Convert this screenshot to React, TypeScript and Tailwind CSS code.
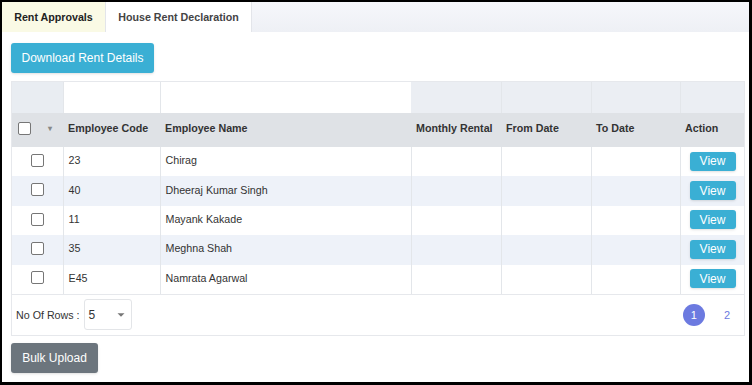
import { ChevronDown } from "lucide-react"

const rows = [
	{ code: "23", name: "Chirag" },
	{ code: "40", name: "Dheeraj Kumar Singh" },
	{ code: "11", name: "Mayank Kakade" },
	{ code: "35", name: "Meghna Shah" },
	{ code: "E45", name: "Namrata Agarwal" },
]

function Box({ className = "" }: { className?: string }) {
	return <span className={`inline-block size-[13px] rounded-[2px] border border-[#767676] bg-white align-middle ${className}`} />
}

export default function App() {
	return (
		<div className="h-[385px] w-[752px] overflow-hidden border-t-2 border-r-[3px] border-b-[3px] border-l-2 border-black bg-white font-['Liberation_Sans',Arial,sans-serif] text-[10.7px] text-[#333]">
			<div className="flex h-[30px] bg-gradient-to-b from-[#f6f7fb] to-[#eef0f5]">
				<div className="flex w-[103px] items-center justify-center bg-[#fafae5] font-bold text-[#222]">Rent Approvals</div>
				<div className="flex w-[147px] items-center justify-center border-x border-[#e3e5ea] bg-white font-bold text-[#444]">
					House Rent Declaration
				</div>
			</div>
			<div className="px-[9px] pt-[11px]">
				<button className="h-[30px] w-[143px] rounded-[3px] bg-[#3aafd4] text-[12px] text-white shadow-sm">Download Rent Details</button>
				<div className="mt-[8px] w-[734px] border border-[#e6e8ec]">
					<table className="w-full table-fixed border-collapse">
						<colgroup>
							<col className="w-[51px]" />
							<col className="w-[97px]" />
							<col className="w-[251px]" />
							<col className="w-[90px]" />
							<col className="w-[90px]" />
							<col className="w-[89px]" />
							<col />
						</colgroup>
						<thead>
							<tr className="h-[31px]">
								<th className="bg-[#e9edf2]" />
								<th className="border-x border-[#e3e6ea] bg-white" />
								<th className="bg-white" />
								<th className="border-r border-[#e3e6ea] bg-[#ebeef3]" />
								<th className="border-r border-[#e3e6ea] bg-[#ebeef3]" />
								<th className="border-r border-[#e3e6ea] bg-[#ebeef3]" />
								<th className="bg-[#ebeef3]" />
							</tr>
							<tr className="h-[34px] bg-[#dfe2e6] text-left font-bold whitespace-nowrap text-[#333]">
								<th className="pb-[3px] pl-[6px]">
									<div className="flex items-center gap-[17px]">
										<Box />
										<span className="text-[8px] text-[#888]">▾</span>
									</div>
								</th>
								<th className="pb-[3px] pl-[5px]">Employee Code</th>
								<th className="pb-[3px] pl-[5px]">Employee Name</th>
								<th className="pb-[3px] pl-[5px]">Monthly Rental</th>
								<th className="pb-[3px] pl-[5px]">From Date</th>
								<th className="pb-[3px] pl-[5px]">To Date</th>
								<th className="pb-[3px] pl-[5px]">Action</th>
							</tr>
						</thead>
						<tbody>
							{rows.map((r, i) => (
								<tr key={r.code} className={`h-[29.4px] ${i % 2 ? "bg-[#eef2f9]" : "bg-white"}`}>
									<td className="pb-[3px] text-center">
										<Box className="-translate-y-[1px]" />
									</td>
									<td className="border-x border-[#e3e6ea] pb-[3px] pl-[5px]">{r.code}</td>
									<td className="border-r border-[#e3e6ea] pb-[3px] pl-[5px]">{r.name}</td>
									<td className="border-r border-[#e3e6ea]" />
									<td className="border-r border-[#e3e6ea]" />
									<td className="border-r border-[#e3e6ea]" />
									<td className="pb-[1px] pl-[9px]">
										<button className="h-[19px] w-[46px] rounded-[3px] bg-[#3aafd4] text-[12px] text-white shadow-sm">View</button>
									</td>
								</tr>
							))}
						</tbody>
					</table>
					<div className="flex h-[41px] items-center border-t border-[#e6e8ec] pr-[14px] pl-[4px]">
						<span className="text-[#333]">No Of Rows :</span>
						<div className="ml-[4px] flex h-[31px] w-[48px] items-center justify-between rounded-[3px] border border-[#e3e5e8] pr-[3px] pl-[4px] text-[12px]">
							<span>5</span>
							<ChevronDown className="size-[14px] fill-[#777] text-[#777]" strokeWidth={0} />
						</div>
						<div className="ml-auto flex items-center gap-[19px] text-[11px]">
							<span className="flex size-[22px] items-center justify-center rounded-full bg-[#6c7ae0] text-white">1</span>
							<span className="text-[#6c7ae0]">2</span>
						</div>
					</div>
				</div>
				<button className="mt-[7px] h-[30px] w-[87px] rounded-[3px] bg-[#6c757d] text-[12px] text-white shadow-sm">Bulk Upload</button>
			</div>
		</div>
	)
}
